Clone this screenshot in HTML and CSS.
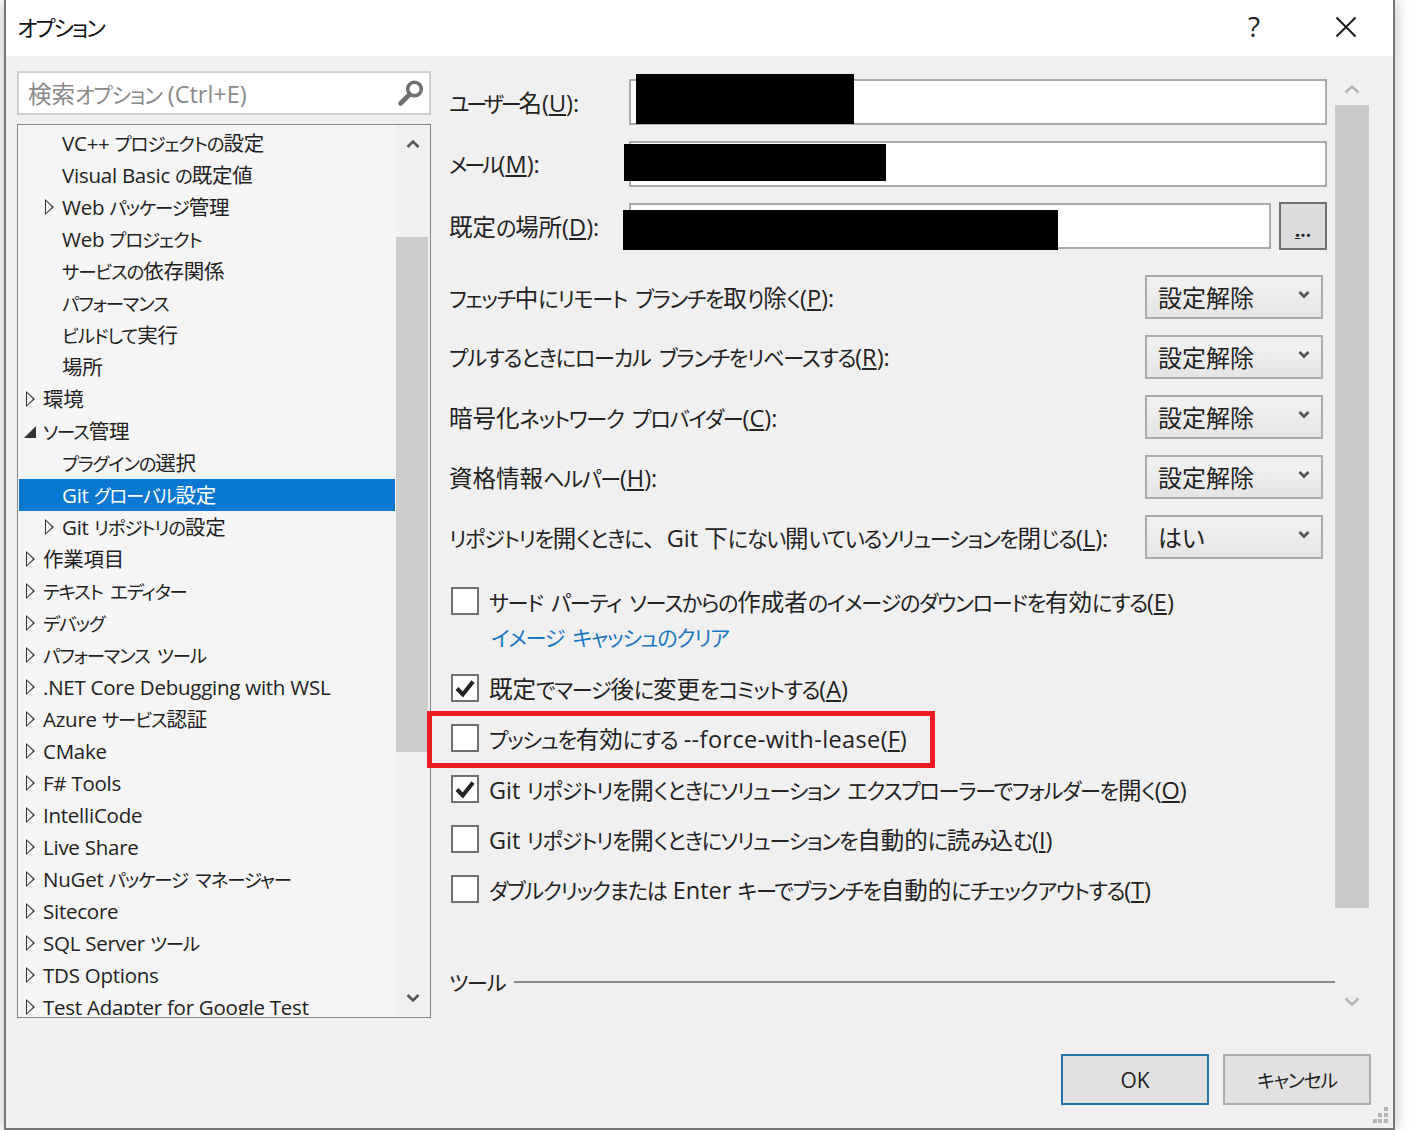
FILE: index.html
```html
<!DOCTYPE html>
<html lang="ja">
<head>
<meta charset="utf-8">
<title>オプション</title>
<link rel="stylesheet" href="styles.css">
</head>
<body>
<div class="window">
  <header class="titlebar">
    <span class="title">オプション</span>
    <div class="title-actions">
      <span class="help">?</span>
      <svg class="close" width="22" height="22" viewBox="0 0 22 22"><path d="M1.5 1.5 L20.5 20.5 M20.5 1.5 L1.5 20.5" stroke="#1a1a1a" stroke-width="2" fill="none"/></svg>
    </div>
  </header>
  <div class="content">
    <div class="columns">
      <aside class="left">
        <div class="search">
          <span class="search-text">検索<span class="k">オプション</span> (Ctrl+E)</span>
          <svg width="28" height="28" viewBox="0 0 28 28"><circle cx="17.5" cy="10" r="6.8" fill="none" stroke="#707070" stroke-width="3.6"/><path d="M12.5 15.5 L3.5 24.5" stroke="#707070" stroke-width="4.6" stroke-linecap="round"/></svg>
        </div>
        <div class="tree">
          <ul class="tree-list">
            <li class="row lv2">VC++ <span class="k">プロジェクトの</span>設定</li>
            <li class="row lv2">Visual Basic <span class="k">の</span>既定値</li>
            <li class="row lv2"><i class="arrow"></i>Web <span class="k">パッケージ</span>管理</li>
            <li class="row lv2">Web <span class="k">プロジェクト</span></li>
            <li class="row lv2"><span class="k">サービスの</span>依存関係</li>
            <li class="row lv2"><span class="k">パフォーマンス</span></li>
            <li class="row lv2"><span class="k">ビルドして</span>実行</li>
            <li class="row lv2">場所</li>
            <li class="row lv1"><i class="arrow"></i>環境</li>
            <li class="row lv1"><i class="arrow open"></i><span class="k">ソース</span>管理</li>
            <li class="row lv2"><span class="k">プラグインの</span>選択</li>
            <li class="row lv2 selected">Git <span class="k">グローバル</span>設定</li>
            <li class="row lv2"><i class="arrow"></i>Git <span class="k">リポジトリの</span>設定</li>
            <li class="row lv1"><i class="arrow"></i>作業項目</li>
            <li class="row lv1"><i class="arrow"></i><span class="k">テキスト エディター</span></li>
            <li class="row lv1"><i class="arrow"></i><span class="k">デバッグ</span></li>
            <li class="row lv1"><i class="arrow"></i><span class="k">パフォーマンス ツール</span></li>
            <li class="row lv1"><i class="arrow"></i>.NET Core Debugging with WSL</li>
            <li class="row lv1"><i class="arrow"></i>Azure <span class="k">サービス</span>認証</li>
            <li class="row lv1"><i class="arrow"></i>CMake</li>
            <li class="row lv1"><i class="arrow"></i>F# Tools</li>
            <li class="row lv1"><i class="arrow"></i>IntelliCode</li>
            <li class="row lv1"><i class="arrow"></i>Live Share</li>
            <li class="row lv1"><i class="arrow"></i>NuGet <span class="k">パッケージ マネージャー</span></li>
            <li class="row lv1"><i class="arrow"></i>Sitecore</li>
            <li class="row lv1"><i class="arrow"></i>SQL Server <span class="k">ツール</span></li>
            <li class="row lv1"><i class="arrow"></i>TDS Options</li>
            <li class="row lv1"><i class="arrow"></i>Test Adapter for Google Test</li>
          </ul>
          <div class="tree-scroll">
            <div class="tree-scroll-top">
              <svg width="14" height="10" viewBox="0 0 14 10"><path d="M1.5 8 L7 2.5 L12.5 8" stroke="#555" stroke-width="2.6" fill="none"/></svg>
            </div>
            <div class="tree-thumb"></div>
            <div class="tree-scroll-bottom">
              <svg width="14" height="10" viewBox="0 0 14 10"><path d="M1.5 2 L7 7.5 L12.5 2" stroke="#555" stroke-width="2.6" fill="none"/></svg>
            </div>
          </div>
        </div>
      </aside>
      <main class="right">
        <div class="form">
          <div class="text-row">
            <label class="label name-label"><span class="k tight">ユーザー</span>名(<u>U</u>):</label>
            <div class="input"><span class="redact r1"></span></div>
          </div>
          <div class="text-row">
            <label class="label name-label"><span class="k tight">メール</span>(<u>M</u>):</label>
            <div class="input"><span class="redact r2"></span></div>
          </div>
          <div class="text-row">
            <label class="label name-label">既定<span class="k">の</span>場所(<u>D</u>):</label>
            <div class="input"><span class="redact r3"></span></div>
            <button class="browse"><u>.</u>..</button>
          </div>
          <div class="combos">
            <div class="combo-row"><label class="label"><span class="k">フェッチ</span>中<span class="k">にリモート ブランチを</span>取<span class="k">り</span>除<span class="k">く</span>(<u>P</u>):</label><div class="combo"><span>設定解除</span><svg width="12" height="10" viewBox="0 0 12 10"><path d="M1.5 2 L6 6.5 L10.5 2" stroke="#555" stroke-width="2.8" fill="none"/></svg></div></div>
            <div class="combo-row"><label class="label"><span class="k">プルするときにローカル ブランチをリベースする</span>(<u>R</u>):</label><div class="combo"><span>設定解除</span><svg width="12" height="10" viewBox="0 0 12 10"><path d="M1.5 2 L6 6.5 L10.5 2" stroke="#555" stroke-width="2.8" fill="none"/></svg></div></div>
            <div class="combo-row"><label class="label">暗号化<span class="k">ネットワーク プロバイダー</span>(<u>C</u>):</label><div class="combo"><span>設定解除</span><svg width="12" height="10" viewBox="0 0 12 10"><path d="M1.5 2 L6 6.5 L10.5 2" stroke="#555" stroke-width="2.8" fill="none"/></svg></div></div>
            <div class="combo-row"><label class="label">資格情報<span class="k">ヘルパー</span>(<u>H</u>):</label><div class="combo"><span>設定解除</span><svg width="12" height="10" viewBox="0 0 12 10"><path d="M1.5 2 L6 6.5 L10.5 2" stroke="#555" stroke-width="2.8" fill="none"/></svg></div></div>
            <div class="combo-row"><label class="label"><span class="k">リポジトリを</span>開<span class="k">くときに</span><span class="comma">、</span>Git 下<span class="k">にない</span>開<span class="k">いているソリューションを</span>閉<span class="k">じる</span>(<u>L</u>):</label><div class="combo"><span>はい</span><svg width="12" height="10" viewBox="0 0 12 10"><path d="M1.5 2 L6 6.5 L10.5 2" stroke="#555" stroke-width="2.8" fill="none"/></svg></div></div>
          </div>
          <div class="check-row first"><span class="box"></span><span class="label"><span class="k">サード パーティ ソースからの</span>作成者<span class="k">のイメージのダウンロードを</span>有効<span class="k">にする</span>(<u>E</u>)</span></div>
          <a class="link"><span class="k">イメージ キャッシュのクリア</span></a>
          <div class="checks">
            <div class="check-row"><span class="box"><svg width="24" height="24" viewBox="0 0 24 24"><path d="M4 12.5 L9.8 18.5 L20 5.5" stroke="#222" stroke-width="4" fill="none"/></svg></span><span class="label">既定<span class="k">でマージ</span>後<span class="k">に</span>変更<span class="k">をコミットする</span>(<u>A</u>)</span></div>
            <div class="check-row"><span class="box"></span><span class="label"><span class="k">プッシュを</span>有効<span class="k">にする</span> <span class="lat">--force-with-lease</span>(<u>F</u>)</span><span class="highlight"></span></div>
            <div class="check-row"><span class="box"><svg width="24" height="24" viewBox="0 0 24 24"><path d="M4 12.5 L9.8 18.5 L20 5.5" stroke="#222" stroke-width="4" fill="none"/></svg></span><span class="label">Git <span class="k">リポジトリを</span>開<span class="k">くときにソリューション エクスプローラーでフォルダーを</span>開<span class="k">く</span>(<u>O</u>)</span></div>
            <div class="check-row"><span class="box"></span><span class="label">Git <span class="k">リポジトリを</span>開<span class="k">くときにソリューションを</span>自動的<span class="k">に</span>読<span class="k">み</span>込<span class="k">む</span>(<u>I</u>)</span></div>
            <div class="check-row"><span class="box"></span><span class="label"><span class="k">ダブルクリックまたは</span> Enter <span class="k">キーでブランチを</span>自動的<span class="k">にチェックアウトする</span>(<u>T</u>)</span></div>
          </div>
          <div class="tools"><span class="label"><span class="k">ツール</span></span><span class="tools-line"></span></div>
        </div>
        <div class="pane-scroll">
          <div class="pane-scroll-top"><svg width="16" height="10" viewBox="0 0 16 10"><path d="M1.5 8.5 L8 2.5 L14.5 8.5" stroke="#b5b5b5" stroke-width="2.4" fill="none"/></svg></div>
          <div class="pane-thumb"></div>
          <div class="pane-scroll-bottom"><svg width="16" height="10" viewBox="0 0 16 10"><path d="M1.5 1.5 L8 7.5 L14.5 1.5" stroke="#b5b5b5" stroke-width="2.4" fill="none"/></svg></div>
        </div>
      </main>
    </div>
    <footer class="footer">
      <button class="btn default">OK</button>
      <button class="btn"><span class="k">キャンセル</span></button>
    </footer>
    <svg class="grip" width="18" height="18" viewBox="0 0 18 18" fill="#b5b5b5"><rect x="11" y="0" width="4" height="4"/><rect x="5" y="6" width="4" height="4"/><rect x="11" y="6" width="4" height="4"/><rect x="0" y="12" width="4" height="4"/><rect x="5" y="12" width="4" height="4"/><rect x="11" y="12" width="4" height="4"/></svg>
  </div>
</div>
</body>
</html>
```

FILE: styles.css
```css
* { box-sizing: border-box; }
html, body { margin: 0; height: 1130px; overflow: hidden; background: #fff; }
body {
  font-family: "Open Sans", "Noto Sans CJK JP", sans-serif;
  font-feature-settings: "palt";
  color: #1e1e1e;
}
.k { font-size: .9em; letter-spacing: -.06em; word-spacing: .2em; }
.k.tight { letter-spacing: -.15em; }
.comma { font-feature-settings: normal; }
.lat { letter-spacing: .4px; }
.window {
  margin-left: 4px;
  width: 1391px;
  height: 1130px;
  border: 2px solid #777;
  border-top: 0;
  box-shadow: 0 0 14px rgba(0,0,0,.28);
  background: #f0f0f0;
  display: flex;
  flex-direction: column;
}
.titlebar {
  height: 56px;
  background: #fff;
  display: flex;
  align-items: center;
  justify-content: space-between;
  padding-left: 11px;
  flex: none;
}
.title { font-size: 22px; letter-spacing: -2px; color: #111; margin-top: -5px; }
.title-actions { display: flex; align-items: center; padding-right: 36px; margin-top: -3px; }
.help { font-size: 28px; width: 20px; text-align: center; margin-right: 71px; margin-top: -2px; color: #222; }
.close { display: block; }
.content { flex: 1; display: flex; flex-direction: column; position: relative; min-height: 0; }
.columns { display: flex; height: 998px; flex: none; }
.left { width: 414px; margin-left: 11px; padding-top: 15px; flex: none; }
.search {
  height: 44px;
  background: #fff;
  border: 2px solid #cfcfd4;
  display: flex;
  align-items: center;
  justify-content: space-between;
  padding: 0 4px 0 9px;
}
.search-text { font-size: 23.5px; color: #8a8a8a; }
.tree {
  margin-top: 9px;
  height: 894px;
  border: 1px solid #828790;
  background: #f5f5f5;
  display: flex;
  overflow: hidden;
}
.tree-list { list-style: none; margin: 0 0 0 1px; padding: 2px 0 0; width: 376px; flex: none; height: 890px; overflow: hidden; }
.row {
  height: 32px;
  line-height: 32px;
  font-size: 20.5px;
  letter-spacing: -.25px;
  white-space: nowrap;
  position: relative;
  color: #222;
}
.lv1 { padding-left: 24px; }
.lv2 { padding-left: 43px; }
.selected { background: #0a78d0; color: #fff; }
.arrow {
  position: absolute;
  top: 8px;
  width: 0;
  height: 0;
  border-left: 9px solid #333;
  border-top: 8px solid transparent;
  border-bottom: 8px solid transparent;
}
.arrow::after {
  content: "";
  position: absolute;
  left: -8px;
  top: -6px;
  border-left: 6.5px solid #f5f5f5;
  border-top: 6px solid transparent;
  border-bottom: 6px solid transparent;
}
.lv1 .arrow { left: 7px; }
.lv2 .arrow { left: 26px; }
.lv1 .arrow.open {
  left: 5px;
  top: 11px;
  border: 0;
  border-left: 12px solid transparent;
  border-bottom: 12px solid #333;
}
.arrow.open::after { display: none; }
.tree-scroll { flex: 1; display: flex; flex-direction: column; align-items: stretch; background: #f0f0f0; border-left: 1px solid #f8f8f8; }
.tree-scroll-top { height: 112px; padding-top: 14px; text-align: center; }
.tree-thumb { height: 515px; background: #cdcdcd; margin: 0 2px 0 0; }
.tree-scroll-bottom { flex: 1; display: flex; align-items: flex-end; justify-content: center; padding-bottom: 14px; }
.tree-scroll svg { display: block; }
.tree-scroll-top svg { margin: 0 auto; }
.right { flex: 1; display: flex; margin-left: 18px; min-width: 0; }
.form { width: 886px; padding-top: 23px; flex: none; }
.label { font-size: 23.5px; white-space: nowrap; color: #222; }
.text-row { display: flex; align-items: center; height: 46px; margin-bottom: 16px; width: 878px; }
.name-label { width: 180px; flex: none; }
.input { flex: 1; height: 46px; background: #fff; border: 2px solid #ababab; position: relative; }
.redact { position: absolute; background: #000; }
.r1 { left: 5px; top: -7px; width: 218px; height: 50px; }
.r2 { left: -7px; top: 1px; width: 262px; height: 37px; }
.r3 { left: -8px; top: 5px; width: 435px; height: 40px; }
.browse {
  width: 48px;
  height: 48px;
  margin-left: 8px;
  border: 2px solid #707070;
  background: #dcdcdc;
  font: bold 19px "Open Sans", sans-serif;
  color: #222;
  padding: 8px 0 0;
  flex: none;
}
.combos { display: flex; flex-direction: column; gap: 16px; margin-top: 26px; width: 874px; }
.combo-row { display: flex; align-items: center; justify-content: space-between; height: 44px; }
.combo {
  width: 178px;
  height: 44px;
  border: 2px solid #acacac;
  background: linear-gradient(#f2f2f2, #e5e5e5);
  display: flex;
  align-items: center;
  justify-content: space-between;
  padding: 0 11px 2px 11px;
  font-size: 24px;
  color: #222;
}
.combo svg { margin-bottom: 3px; }
.check-row { display: flex; align-items: center; height: 28px; position: relative; }
.check-row.first { margin-top: 28px; }
.box {
  width: 28px;
  height: 28px;
  background: #fff;
  border: 2px solid #707070;
  margin: 0 10px 0 2px;
  flex: none;
  display: flex;
  align-items: center;
  justify-content: center;
}
.link { display: block; font-size: 23.5px; color: #1b78c0; margin: 6px 0 0 42px; line-height: 32px; height: 32px; }
.checks { display: flex; flex-direction: column; gap: 22.3px; margin-top: 21px; }
.highlight {
  position: absolute;
  left: -22px;
  top: -13px;
  width: 508px;
  height: 57px;
  border: 5px solid #ed1c24;
  pointer-events: none;
}
.tools { display: flex; align-items: center; gap: 9px; margin-top: 62px; height: 34px; }
.tools-line { flex: 1; height: 2px; background: #8a8a8a; }
.pane-scroll { width: 34px; margin-top: 0; display: flex; flex-direction: column; }
.pane-scroll-top { height: 49px; padding-top: 28px; text-align: center; }
.pane-scroll svg { display: block; margin: 0 auto; }
.pane-thumb { height: 803px; background: #c9c9c9; }
.pane-scroll-bottom { padding-top: 89px; }
.footer { display: flex; justify-content: flex-end; gap: 14px; padding-right: 22px; flex: none; }
.btn {
  width: 148px;
  height: 51px;
  background: #e1e1e1;
  border: 2px solid #adadad;
  font: 21px "Open Sans", "Noto Sans CJK JP", sans-serif;
  font-feature-settings: "palt";
  color: #222;
  padding: 0;
}
.btn.default { border-color: #2872a8; }
.grip { position: absolute; right: 2px; bottom: 3px; }
```
